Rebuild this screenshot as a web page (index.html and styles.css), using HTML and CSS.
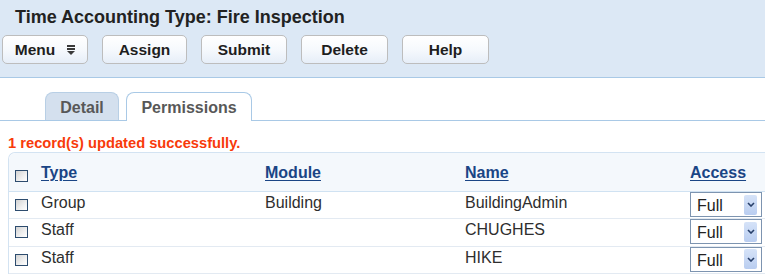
FILE: index.html
```html
<!DOCTYPE html>
<html>
<head>
<meta charset="utf-8">
<title>Time Accounting Type</title>
<link rel="stylesheet" href="styles.css">
</head>
<body>
<div class="header">
  <h1 class="title">Time Accounting Type: Fire Inspection</h1>
  <div class="toolbar">
    <button class="btn btn-menu">Menu
      <svg class="menu-icon" width="8" height="10" viewBox="0 0 8 10"><rect x="0" y="0" width="8" height="2" fill="#3a3a3a"/><rect x="0" y="3" width="8" height="2" fill="#3a3a3a"/><polygon points="0,6 8,6 4,10" fill="#3a3a3a"/></svg>
    </button>
    <button class="btn btn-assign">Assign</button>
    <button class="btn btn-submit">Submit</button>
    <button class="btn btn-delete">Delete</button>
    <button class="btn btn-help">Help</button>
  </div>
</div>

<div class="tabs">
  <div class="tab tab-detail">Detail</div>
  <div class="tab tab-active">Permissions</div>
</div>

<div class="message">1 record(s) updated successfully.</div>

<div class="grid">
  <div class="row head">
    <div class="cell cb"><span class="checkbox"></span></div>
    <div class="cell"><a class="sort">Type</a></div>
    <div class="cell"><a class="sort">Module</a></div>
    <div class="cell"><a class="sort">Name</a></div>
    <div class="cell"><a class="sort">Access</a></div>
  </div>
  <div class="row">
    <div class="cell cb"><span class="checkbox"></span></div>
    <div class="cell">Group</div>
    <div class="cell">Building</div>
    <div class="cell">BuildingAdmin</div>
    <div class="cell acc"><div class="select"><span class="val">Full</span><span class="arrow"><svg width="8" height="5" viewBox="0 0 8 5"><polyline points="1,1 4,4 7,1" fill="none" stroke="#28406a" stroke-width="1.6"/></svg></span></div></div>
  </div>
  <div class="row">
    <div class="cell cb"><span class="checkbox"></span></div>
    <div class="cell">Staff</div>
    <div class="cell"></div>
    <div class="cell">CHUGHES</div>
    <div class="cell acc"><div class="select"><span class="val">Full</span><span class="arrow"><svg width="8" height="5" viewBox="0 0 8 5"><polyline points="1,1 4,4 7,1" fill="none" stroke="#28406a" stroke-width="1.6"/></svg></span></div></div>
  </div>
  <div class="row">
    <div class="cell cb"><span class="checkbox"></span></div>
    <div class="cell">Staff</div>
    <div class="cell"></div>
    <div class="cell">HIKE</div>
    <div class="cell acc"><div class="select"><span class="val">Full</span><span class="arrow"><svg width="8" height="5" viewBox="0 0 8 5"><polyline points="1,1 4,4 7,1" fill="none" stroke="#28406a" stroke-width="1.6"/></svg></span></div></div>
  </div>
</div>
</body>
</html>
```

FILE: styles.css
```css
html, body {
  margin: 0;
  padding: 0;
  overflow: hidden;
  background: #ffffff;
  font-family: "Liberation Sans", Arial, sans-serif;
}

.header {
  box-sizing: content-box;
  height: 71px;
  padding-top: 6px;
  background: #dce8f5;
  border-bottom: 1px solid #a9c9e6;
}

.title {
  margin: 0 0 7px 15px;
  font-size: 18px;
  line-height: 22px;
  font-weight: bold;
  color: #222222;
}

.toolbar {
  display: flex;
  gap: 14px;
  padding-left: 2px;
}

.btn {
  height: 29px;
  padding: 0;
  border: 1px solid #bdbdbd;
  border-radius: 5px;
  background: linear-gradient(#ffffff 0%, #f6f9fd 50%, #e6eef8 100%);
  font-family: "Liberation Sans", Arial, sans-serif;
  font-size: 15.5px;
  font-weight: bold;
  line-height: 27px;
  color: #1e1e1e;
  display: flex;
  align-items: center;
  justify-content: center;
}

.btn-menu { width: 86px; gap: 12px; }
.btn-assign { width: 85px; }
.btn-submit { width: 86px; }
.btn-delete { width: 87px; }
.btn-help { width: 87px; }

.menu-icon { display: block; margin-top: 1px; }

.tabs {
  margin-top: 14px;
  display: flex;
  gap: 7px;
  padding-left: 45px;
  border-bottom: 1px solid #a9c9e6;
  height: 28px;
}

.tab {
  box-sizing: border-box;
  height: 28px;
  padding-top: 2px;
  line-height: 25px;
  font-size: 16px;
  font-weight: bold;
  color: #585858;
  text-align: center;
  border: 1px solid #b8cfe5;
  border-bottom: none;
  border-radius: 8px 8px 0 0;
}

.tab-detail {
  width: 74px;
  background: #d4e0ee;
}

.tab-active {
  width: 126px;
  height: 29px;
  background: #ffffff;
  border-color: #a9c9e6;
}

.message {
  margin: 13px 0 0 8px;
  font-size: 14.7px;
  line-height: 18px;
  font-weight: bold;
  color: #f83a0a;
}

.grid {
  margin-left: 8px;
  border-left: 1px solid #d3e3f2;
  border-top: 1px solid #d3e3f2;
  border-top-left-radius: 7px;
}

.row {
  display: grid;
  grid-template-columns: 32px 224px 200px 225px 1fr;
  height: 26.4px;
  border-bottom: 1px solid #e3eaf2;
  font-size: 16px;
  color: #2e2e2e;
}

.row.head {
  height: 38px;
  background: #f4f8fc;
  border-bottom: 1px solid #d0e2f2;
  border-top-left-radius: 7px;
}

.cell {
  padding-top: 1px;
  line-height: 20px;
  white-space: nowrap;
}

.head .cell {
  padding-top: 10px;
}

.cb {
  padding-left: 6px;
  padding-top: 7px;
}

.head .cb {
  padding-top: 17px;
}

.checkbox {
  display: block;
  box-sizing: border-box;
  width: 13px;
  height: 12px;
  border: 1px solid #2d4c6e;
  background: linear-gradient(135deg, #d2d2d2 0%, #f0f0f0 60%, #ffffff 100%);
}

.sort {
  font-weight: bold;
  color: #1a4585;
  text-decoration: underline;
  text-underline-offset: 2px;
}

.acc {
  padding-top: 0;
}

.select {
  box-sizing: border-box;
  width: 72px;
  height: 25px;
  border: 1px solid #7d94b0;
  background: #ffffff;
  display: flex;
  align-items: center;
  justify-content: space-between;
  padding: 0 4px 0 6px;
}

.val {
  font-size: 16px;
  line-height: 20px;
  color: #222222;
  padding-top: 3px;
}

.arrow {
  width: 13px;
  height: 20px;
  background: linear-gradient(#d6e3f8, #b9cdf0);
  border-radius: 2px;
  display: flex;
  align-items: center;
  justify-content: center;
}

.arrow svg { display: block; }
```
